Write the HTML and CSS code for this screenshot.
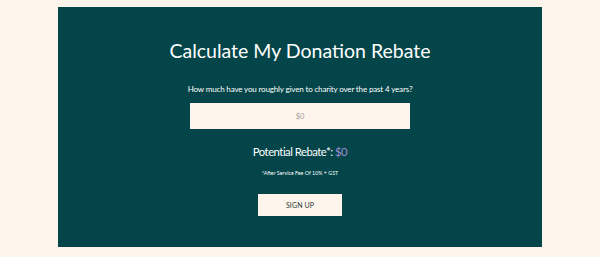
FILE: index.html
```html
<!DOCTYPE html>
<html lang="en">
<head>
  <meta charset="UTF-8">
  <meta name="viewport" content="width=device-width, initial-scale=1.0">
  <title>Donation Rebate Calculator</title>
  <link rel="stylesheet" href="styles.css">
</head>
<body>
  <section class="rebate-box">
    <h2>Calculate My Donation Rebate</h2>
    <label for="amount" class="question">How much have you roughly given to charity over the past 4 years?</label>
    <input type="text" id="amount" class="amount-input" placeholder="$0">
    <p class="result">Potential Rebate*: <span class="result-value">$0</span></p>
    <p class="note">*After Service Fee Of 10% + GST</p>
    <button type="button" class="signup-btn">SIGN UP</button>
  </section>
</body>
</html>
```
FILE: styles.css
```css
:root {
  --cream: #fdf5ec;
  --teal: #034548;
  --purple: #a08fd6;
}
html {
  font-family: Lato, "Open Sans", sans-serif;
}
body {
  margin: 0;
  background: var(--cream);
  padding: 7px 58px 10px;
}
.rebate-box {
  background: var(--teal);
  height: 240px;
  display: flex;
  flex-direction: column;
  align-items: center;
  color: #fff;
  box-sizing: border-box;
  padding-top: 31px;
}
h2 {
  margin: 0;
  font-size: 19.5px;
  font-weight: 400;
  line-height: 26px;
}
.question {
  margin-top: 19px;
  font-size: 8px;
  letter-spacing: -.15px;
  line-height: 12px;
}
.amount-input {
  margin-top: 8px;
  width: 220px;
  height: 26px;
  box-sizing: border-box;
  border: none;
  background: var(--cream);
  text-align: center;
  font-family: inherit;
  font-size: 7.5px;
  color: #888;
}
.amount-input::placeholder { color: #a09c98; }
.result {
  margin: 15px 0 0;
  font-size: 11.3px;
  letter-spacing: -.5px;
  line-height: 16px;
}
.result-value { color: var(--purple); }
.note {
  margin: 9px 0 0;
  font-size: 5.3px;
  line-height: 8px;
}
.signup-btn {
  margin-top: 17px;
  width: 84px;
  height: 22px;
  border: none;
  background: var(--cream);
  color: #253839;
  font-family: inherit;
  font-size: 7px;
  letter-spacing: .1px;
}
```
